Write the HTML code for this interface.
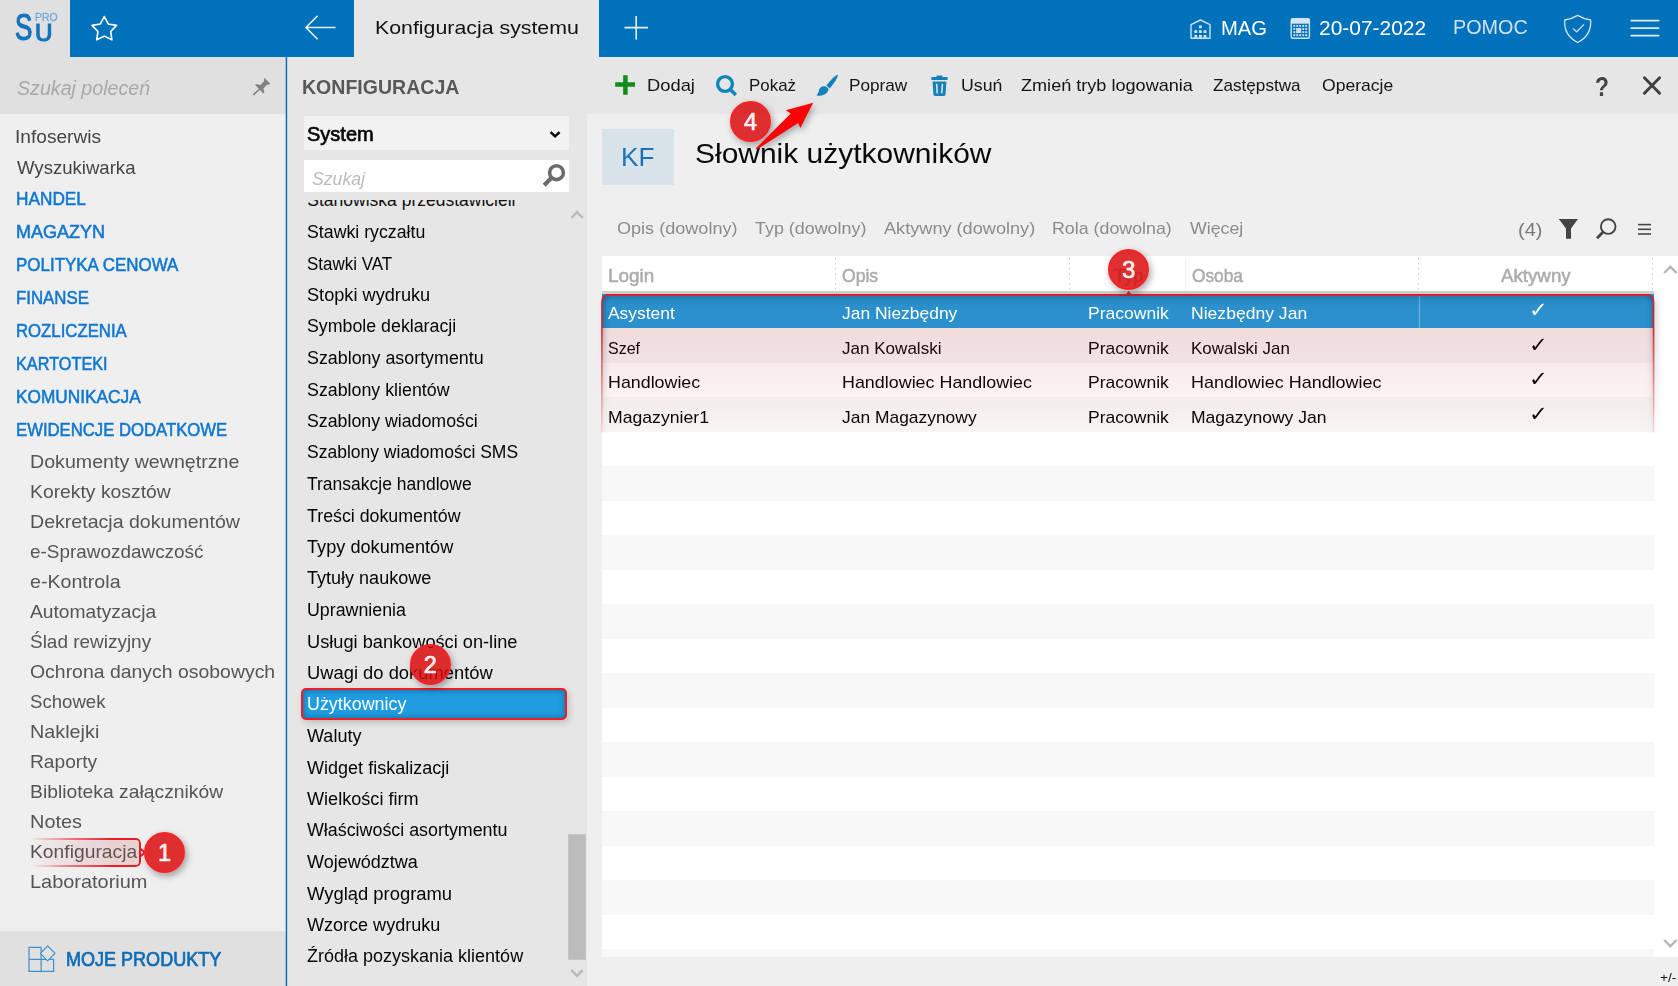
<!DOCTYPE html>
<html lang="pl">
<head>
<meta charset="utf-8">
<title>Konfiguracja systemu - Słownik użytkowników</title>
<style>
html,body{margin:0;padding:0;}
body{width:1678px;height:986px;position:relative;overflow:hidden;background:#efefef;font-family:"Liberation Sans",sans-serif;}
.a{position:absolute;}
.t{position:absolute;white-space:pre;line-height:1;display:block;z-index:4;}
.z5{z-index:6;}
svg{position:absolute;overflow:visible;}
.badge{position:absolute;width:37px;height:37px;border-radius:50%;background:rgba(217,6,8,.83);border:2px solid #f62226;box-shadow:2px 3px 7px rgba(0,0,0,.35);z-index:9;}
.badge span{position:absolute;left:0;right:0;text-align:center;color:rgba(255,255,255,.93);font-weight:400;-webkit-text-stroke:0.7px rgba(255,255,255,.93);font-size:23.5px;line-height:1;top:8px;}
</style>
</head>
<body>
<!-- ======= top bar ======= -->
<div class="a" style="left:0;top:0;width:1678px;height:57px;background:#0071bb;"></div>
<div class="a" style="left:0;top:0;width:70px;height:57px;background:#e0e0e0;"></div>
<div class="a" style="left:354px;top:0;width:245px;height:57px;background:#e6e6e6;"></div>
<!-- ======= left sidebar ======= -->
<div class="a" style="left:0;top:57px;width:286px;height:57px;background:#e0e0e0;"></div>
<div class="a" style="left:0;top:114px;width:286px;height:818px;background:#efefef;"></div>
<div class="a" style="left:0;top:931px;width:286px;height:55px;background:#e0e0e0;"></div>
<!-- ======= middle panel + toolbar ======= -->
<div class="a" style="left:286px;top:57px;width:301px;height:929px;background:#e6e6e6;"></div>
<div class="a" style="left:587px;top:57px;width:1091px;height:57px;background:#e6e6e6;"></div>
<div class="a" style="left:304px;top:116px;width:265px;height:34px;background:#f2f2f2;"></div>
<div class="a" style="left:304px;top:160px;width:265px;height:32px;background:#ffffff;"></div>
<!-- selected list item -->
<div class="a" style="left:301px;top:688px;width:262px;height:28px;background:#1f9de0;border:2px solid #ee1c25;border-radius:5px;box-shadow:inset 0 0 6px rgba(0,40,90,.45), 2px 3px 6px rgba(0,0,0,.18);z-index:5;"></div>
<!-- list scrollbar -->
<div class="a" style="left:568px;top:834px;width:16px;height:124px;background:#bcbcbc;border:1px solid #c6c6c6;"></div>
<!-- ======= content ======= -->
<div class="a" style="left:602px;top:129px;width:72px;height:56px;background:#d9e3ea;"></div>
<!-- table -->
<div class="a" id="tbl" style="left:602px;top:256px;width:1076px;height:701px;background:#ffffff;overflow:hidden;">
<div class="a" style="left:0;top:72.3px;width:1052px;height:34.5px;background:#f8f8f8;"></div>
<div class="a" style="left:0;top:141.3px;width:1052px;height:34.5px;background:#f8f8f8;"></div>
<div class="a" style="left:0;top:210.3px;width:1052px;height:34.5px;background:#f8f8f8;"></div>
<div class="a" style="left:0;top:279.3px;width:1052px;height:34.5px;background:#f8f8f8;"></div>
<div class="a" style="left:0;top:348.3px;width:1052px;height:34.5px;background:#f8f8f8;"></div>
<div class="a" style="left:0;top:417.3px;width:1052px;height:34.5px;background:#f8f8f8;"></div>
<div class="a" style="left:0;top:486.3px;width:1052px;height:34.5px;background:#f8f8f8;"></div>
<div class="a" style="left:0;top:555.3px;width:1052px;height:34.5px;background:#f8f8f8;"></div>
<div class="a" style="left:0;top:624.3px;width:1052px;height:34.5px;background:#f8f8f8;"></div>
<div class="a" style="left:0;top:693.3px;width:1052px;height:34.5px;background:#f8f8f8;"></div>
</div>
<div class="a" style="left:602px;top:291px;width:1052px;height:3px;background:#d2d2d2;"></div>
<svg class="a" style="left:0;top:0;z-index:3;" width="1678" height="986" viewBox="0 0 1678 986"><rect x="285.7" y="57" width="1.5" height="929" fill="#0a6fbc"/>
<polygon points="104.30,16.50 108.24,23.98 116.57,25.41 110.67,31.47 111.88,39.84 104.30,36.10 96.72,39.84 97.93,31.47 92.03,25.41 100.36,23.98" fill="none" stroke="#ffffff" stroke-width="1.6" stroke-linejoin="round"/>
<path d="M335.5,27.5 H306 M317.6,15.8 L306,27.5 L317.6,39.2" fill="none" stroke="#e8f1f8" stroke-width="1.6"/>
<path d="M624.5,27.6 H648 M636.2,16 V39.5" fill="none" stroke="#e8f1f8" stroke-width="1.6"/>
<path d="M1191,38.2 V24.6 L1200.5,20 L1210,24.6 V38.2 Z" fill="none" stroke="#cfe1f0" stroke-width="1.4" stroke-linejoin="round"/>
<rect x="1199.0" y="25.4" width="2.8" height="2.8" fill="#d5e5f2"/>
<rect x="1194.4" y="30.2" width="2.8" height="2.8" fill="#d5e5f2"/>
<rect x="1199.0" y="30.2" width="2.8" height="2.8" fill="#d5e5f2"/>
<rect x="1203.6" y="30.2" width="2.8" height="2.8" fill="#d5e5f2"/>
<rect x="1194.4" y="35.0" width="2.8" height="2.8" fill="#d5e5f2"/>
<rect x="1199.0" y="35.0" width="2.8" height="2.8" fill="#d5e5f2"/>
<rect x="1203.6" y="35.0" width="2.8" height="2.8" fill="#d5e5f2"/>
<rect x="1291.2" y="18.7" width="18.2" height="19.6" rx="1.5" fill="none" stroke="#cfe1f0" stroke-width="1.4"/>
<rect x="1291.2" y="18.7" width="18.2" height="5" fill="#d3e4f2"/>
<rect x="1293.35" y="24.95" width="1.9" height="1.9" fill="#cfe1f0"/>
<rect x="1296.30" y="24.95" width="1.9" height="1.9" fill="#cfe1f0"/>
<rect x="1299.25" y="24.95" width="1.9" height="1.9" fill="#cfe1f0"/>
<rect x="1302.30" y="24.95" width="1.9" height="1.9" fill="#cfe1f0"/>
<rect x="1305.25" y="24.95" width="1.9" height="1.9" fill="#cfe1f0"/>
<rect x="1293.35" y="28.05" width="1.9" height="1.9" fill="#cfe1f0"/>
<rect x="1296.30" y="28.05" width="1.9" height="1.9" fill="#cfe1f0"/>
<rect x="1299.25" y="28.05" width="1.9" height="1.9" fill="#cfe1f0"/>
<rect x="1302.30" y="28.05" width="1.9" height="1.9" fill="#cfe1f0"/>
<rect x="1305.25" y="28.05" width="1.9" height="1.9" fill="#cfe1f0"/>
<rect x="1293.35" y="31.15" width="1.9" height="1.9" fill="#cfe1f0"/>
<rect x="1296.30" y="31.15" width="1.9" height="1.9" fill="#cfe1f0"/>
<rect x="1299.25" y="31.15" width="1.9" height="1.9" fill="#cfe1f0"/>
<rect x="1302.30" y="31.15" width="1.9" height="1.9" fill="#cfe1f0"/>
<rect x="1305.25" y="31.15" width="1.9" height="1.9" fill="#cfe1f0"/>
<rect x="1293.35" y="34.25" width="1.9" height="1.9" fill="#cfe1f0"/>
<rect x="1296.30" y="34.25" width="1.9" height="1.9" fill="#cfe1f0"/>
<rect x="1299.25" y="34.25" width="1.9" height="1.9" fill="#cfe1f0"/>
<rect x="1302.30" y="34.25" width="1.9" height="1.9" fill="#cfe1f0"/>
<rect x="1305.25" y="34.25" width="1.9" height="1.9" fill="#cfe1f0"/>
<rect x="1296.3" y="28.05" width="4.85" height="5" fill="#cfe1f0"/>
<path d="M1577.7,15.4 C1582,18 1586,19.4 1590.6,20 C1591.4,30 1586.5,38 1577.7,42.5 C1568.9,38 1564,30 1564.8,20 C1569.4,19.4 1573.4,18 1577.7,15.4 Z" fill="none" stroke="#d5e5f2" stroke-width="1.3" stroke-linejoin="round"/>
<path d="M1573,28.4 L1576.6,31.9 L1584,24.4" fill="none" stroke="#d5e5f2" stroke-width="1.3"/>
<path d="M1631.2,20.6 H1658.6" stroke="#dfebf5" stroke-width="1.8" stroke-linecap="round"/>
<path d="M1631.2,28.1 H1658.6" stroke="#dfebf5" stroke-width="1.8" stroke-linecap="round"/>
<path d="M1631.2,35.6 H1658.6" stroke="#dfebf5" stroke-width="1.8" stroke-linecap="round"/>
<path d="M1644.4,77.7 L1659.6,93.3 M1659.6,77.7 L1644.4,93.3" stroke="#404040" stroke-width="2.9" stroke-linecap="round"/>
<path d="M264.6,78.1 L270.3,83.8 L268.6,84.7 L267.3,84.4 L263.4,88.6 L264.4,93.0 L263.4,93.6 L255.2,85.0 L255.9,84.0 L260.4,85.0 L264.2,81.0 L263.8,79.3 Z" fill="#828282"/>
<path d="M259.6,89.0 L253.9,94.4" stroke="#828282" stroke-width="1.7" stroke-linecap="round"/>
<path d="M550.6,132.2 L555.1,136.4 L559.6,132.2" fill="none" stroke="#0a0a0a" stroke-width="2.5"/>
<circle cx="556.5" cy="172.7" r="6.9" fill="none" stroke="#6b6b6b" stroke-width="3.6"/>
<path d="M551.6,177.8 L544.2,185.2" stroke="#6b6b6b" stroke-width="4.2"/>
<path d="M571.4,217.8 L577,212.2 L582.6,217.8" fill="none" stroke="#bababa" stroke-width="2.5"/>
<path d="M571.4,970.2 L577,975.8 L582.6,970.2" fill="none" stroke="#bababa" stroke-width="2.6"/>
<path d="M1664.2,273 L1670.4,266.8 L1676.6,273" fill="none" stroke="#b8b8b8" stroke-width="2.4"/>
<path d="M1664.2,940 L1670.4,946.2 L1676.6,940" fill="none" stroke="#b8b8b8" stroke-width="2.4"/>
<path d="M615.2,84.6 H635 M625.4,75.2 V94.7" stroke="#128a1c" stroke-width="4.5"/>
<circle cx="725" cy="84" r="7.4" fill="none" stroke="#0f86ba" stroke-width="3.4"/>
<path d="M730.4,89.6 L735.8,95" stroke="#0f86ba" stroke-width="3.6" stroke-linecap="butt"/>
<path d="M837.6,74.8 C838.4,76.6 834.5,83.2 829.6,88.6 L826.4,85.6 C830.5,80 836,74.6 837.6,74.8 Z" fill="#1482b8"/>
<path d="M825.6,86.6 C822.4,85.6 819.4,87.6 818.9,90.6 C818.6,92.8 817.6,94.4 816.2,95.6 C821.6,96.2 826.6,94.6 828.4,90.2 C828.9,88.9 827.6,87.4 825.6,86.6 Z" fill="#1482b8"/>
<path d="M936.6,76.9 V75.6 H942.4 V76.9 H947.6 V79.9 H931.4 V76.9 Z" fill="#1482b8"/>
<path d="M932.6,81.4 H946.4 L945.6,94.2 Q945.5,95.9 943.8,95.9 H935.2 Q933.5,95.9 933.4,94.2 Z" fill="#1482b8"/>
<path d="M936.6,83.8 L937.2,93.4 M942.4,83.8 L941.8,93.4" stroke="#e6e6e6" stroke-width="1.5"/>
<path d="M1558.8,219 H1578 L1571,228.6 V238.8 H1566 V228.6 Z" fill="#444"/>
<circle cx="1608.2" cy="226.6" r="7.3" fill="none" stroke="#444" stroke-width="1.9"/>
<path d="M1602.8,232.2 L1597,238.2" stroke="#444" stroke-width="2.8"/>
<path d="M1638,224.6 H1651" stroke="#444" stroke-width="1.6"/>
<path d="M1638,229.3 H1651" stroke="#444" stroke-width="1.6"/>
<path d="M1638,234 H1651" stroke="#444" stroke-width="1.6"/>
<path d="M29,947.3 H41.1 V971.3 H29 Z M29,959.4 H53.6 V971.3 H41.1" fill="none" stroke="#3f8fcc" stroke-width="1.2"/>
<path d="M47.6,945.9 L55,953.3 L47.6,960.8 L40.4,953.3 Z" fill="#e0e0e0" stroke="#3f8fcc" stroke-width="1.2" stroke-linejoin="round"/>
<path d="M835.5,258 V291" stroke="#cfcfcf" stroke-width="1" stroke-dasharray="1.5 3.5"/>
<path d="M1069.5,258 V291" stroke="#cfcfcf" stroke-width="1" stroke-dasharray="1.5 3.5"/>
<path d="M1418.5,258 V291" stroke="#cfcfcf" stroke-width="1" stroke-dasharray="1.5 3.5"/>
<path d="M1652.5,258 V291" stroke="#cfcfcf" stroke-width="1" stroke-dasharray="1.5 3.5"/>
<path d="M1185.5,258 V291" stroke="#f4f4f4" stroke-width="1"/></svg>
<div class="a" style="left:602px;top:294px;width:1052px;height:34.2px;background:#2b90cc;z-index:1;"></div>
<div class="a" style="left:1419px;top:296px;width:1px;height:32px;background:rgba(255,255,255,.35);z-index:2;"></div>
<div class="a" style="left:590px;top:284px;width:1088px;height:152px;z-index:5;-webkit-mask-image:linear-gradient(to bottom,#000 0,#000 29%,rgba(0,0,0,.13) 97.5%,rgba(0,0,0,0) 98%);mask-image:linear-gradient(to bottom,#000 0,#000 29%,rgba(0,0,0,.13) 97.5%,rgba(0,0,0,0) 98%);"><div class="a" style="left:12px;top:10px;width:1052px;height:142px;border-radius:7px 7px 0 0;background:linear-gradient(to bottom,rgba(0,0,0,0) 0,rgba(0,0,0,0) 34.2px,rgba(190,30,30,.13) 34.2px);box-shadow:inset 0 6px 8px -3px rgba(0,20,60,.28), inset 6px 0 6px -4px rgba(0,0,0,.22), inset -6px 0 6px -4px rgba(0,0,0,.22), 3px 2px 7px rgba(0,0,0,.16);"></div><svg class="a" style="left:0;top:0;" width="1088" height="152" viewBox="0 0 1088 152"><path d="M11.9,152 V17.5 Q11.9,11 18.8,11 H1056.5 Q1063.6,11 1063.6,17.5 V152" fill="none" stroke="#e01b29" stroke-width="1.5"/><path d="M16,11 H1060" fill="none" stroke="#dd1f2c" stroke-width="2"/></svg></div>
<svg class="a" style="left:1118px;top:286px;z-index:8;" width="22" height="12" viewBox="0 0 22 12"><path d="M7.6,9.6 L10.7,5.6 L13.8,9.6" fill="#dd1f2c" stroke="#dd1f2c" stroke-width="1"/></svg>
<div class="a" style="left:30px;top:838px;width:109px;height:25px;border:2px solid #ee1c25;border-left:none;border-radius:0 5px 5px 0;background:rgba(200,60,60,.16);z-index:5;-webkit-mask-image:linear-gradient(to right,rgba(0,0,0,.0) 0,rgba(0,0,0,.55) 35%,#000 75%);mask-image:linear-gradient(to right,rgba(0,0,0,.0) 0,rgba(0,0,0,.55) 35%,#000 75%);"></div>
<svg class="a" style="left:139px;top:845px;z-index:8;" width="10" height="16" viewBox="0 0 10 16"><path d="M1.2,3.6 L5.8,7.6 L1.2,11.6" fill="none" stroke="#ee1c25" stroke-width="2"/></svg>
<div class="badge" style="left:144.0px;top:832.0px;"><span>1</span></div>
<div class="badge" style="left:409.8px;top:644.3px;"><span>2</span></div>
<div class="badge" style="left:1108.2px;top:249.2px;"><span>3</span></div>
<div class="badge" style="left:730.0px;top:101.2px;"><span>4</span></div>
<svg class="a" style="left:0;top:0;z-index:10;filter:drop-shadow(2px 3px 3px rgba(0,0,0,.3));" width="900" height="200" viewBox="0 0 900 200"><path d="M755.6,148.6 L790.8,113.4 L785.8,110.2 L813.2,102.7 L800.4,128 L798.1,123 L757,149.6 Z" fill="#fb0207"/></svg>
<div class="a" style="left:300px;top:199.5px;width:266px;height:12px;overflow:hidden;z-index:4;"><span class="t" style="left:7.3px;top:-7.8px;font-size:17.5px;color:#111;transform:scaleX(1.0);transform-origin:0 0;" id="clipitem">Stanowiska przedstawicieli</span></div>
<div id="topbar">
<span class="t " style="left:375.28px;top:18.00px;font-size:19px;color:#111;transform:scaleX(1.1223);transform-origin:0 0;">Konfiguracja systemu</span>
<span class="t " style="left:1220.71px;top:18.00px;font-size:20.5px;color:#ffffff;transform:scaleX(0.9877);transform-origin:0 0;">MAG</span>
<span class="t " style="left:1318.78px;top:18.00px;font-size:20.5px;color:#ffffff;transform:scaleX(1.0216);transform-origin:0 0;">20-07-2022</span>
<span class="t " style="left:1453.03px;top:17.00px;font-size:20.5px;color:#cfe2f1;transform:scaleX(0.9655);transform-origin:0 0;">POMOC</span>
</div>
<div id="sidebar-menu">
<span class="t " style="left:17.10px;top:78.00px;font-size:20px;color:#a8a8a8;font-style:italic;transform:scaleX(0.9814);transform-origin:0 0;">Szukaj poleceń</span>
<span class="t " style="left:15.49px;top:127.00px;font-size:19px;color:#444444;transform:scaleX(1.0068);transform-origin:0 0;">Infoserwis</span>
<span class="t " style="left:16.50px;top:158.00px;font-size:19px;color:#444444;transform:scaleX(0.9772);transform-origin:0 0;">Wyszukiwarka</span>
<span class="t " style="left:15.50px;top:190.00px;font-size:18px;color:#1077d0;transform:scaleX(0.9574);transform-origin:0 0;-webkit-text-stroke:0.55px #1077d0;">HANDEL</span>
<span class="t " style="left:15.50px;top:223.00px;font-size:18px;color:#1077d0;transform:scaleX(0.9999);transform-origin:0 0;-webkit-text-stroke:0.55px #1077d0;">MAGAZYN</span>
<span class="t " style="left:15.50px;top:256.00px;font-size:18px;color:#1077d0;transform:scaleX(0.9420);transform-origin:0 0;-webkit-text-stroke:0.55px #1077d0;">POLITYKA CENOWA</span>
<span class="t " style="left:15.50px;top:289.00px;font-size:18px;color:#1077d0;transform:scaleX(0.9345);transform-origin:0 0;-webkit-text-stroke:0.55px #1077d0;">FINANSE</span>
<span class="t " style="left:15.50px;top:322.00px;font-size:18px;color:#1077d0;transform:scaleX(0.9302);transform-origin:0 0;-webkit-text-stroke:0.55px #1077d0;">ROZLICZENIA</span>
<span class="t " style="left:15.50px;top:355.00px;font-size:18px;color:#1077d0;transform:scaleX(0.9037);transform-origin:0 0;-webkit-text-stroke:0.55px #1077d0;">KARTOTEKI</span>
<span class="t " style="left:15.50px;top:388.00px;font-size:18px;color:#1077d0;transform:scaleX(0.9592);transform-origin:0 0;-webkit-text-stroke:0.55px #1077d0;">KOMUNIKACJA</span>
<span class="t " style="left:15.50px;top:421.00px;font-size:18px;color:#1077d0;transform:scaleX(0.9277);transform-origin:0 0;-webkit-text-stroke:0.55px #1077d0;">EWIDENCJE DODATKOWE</span>
<span class="t " style="left:30.00px;top:452.00px;font-size:19px;color:#555555;transform:scaleX(1.0327);transform-origin:0 0;">Dokumenty wewnętrzne</span>
<span class="t " style="left:30.00px;top:482.00px;font-size:19px;color:#555555;transform:scaleX(1.0173);transform-origin:0 0;">Korekty kosztów</span>
<span class="t " style="left:30.00px;top:512.00px;font-size:19px;color:#555555;transform:scaleX(1.0299);transform-origin:0 0;">Dekretacja dokumentów</span>
<span class="t " style="left:30.00px;top:542.00px;font-size:19px;color:#555555;transform:scaleX(0.9958);transform-origin:0 0;">e-Sprawozdawczość</span>
<span class="t " style="left:30.00px;top:572.00px;font-size:19px;color:#555555;transform:scaleX(1.0330);transform-origin:0 0;">e-Kontrola</span>
<span class="t " style="left:30.00px;top:602.00px;font-size:19px;color:#555555;transform:scaleX(1.0124);transform-origin:0 0;">Automatyzacja</span>
<span class="t " style="left:30.00px;top:632.00px;font-size:19px;color:#555555;transform:scaleX(0.9973);transform-origin:0 0;">Ślad rewizyjny</span>
<span class="t " style="left:30.00px;top:662.00px;font-size:19px;color:#555555;transform:scaleX(1.0226);transform-origin:0 0;">Ochrona danych osobowych</span>
<span class="t " style="left:30.00px;top:692.00px;font-size:19px;color:#555555;transform:scaleX(0.9794);transform-origin:0 0;">Schowek</span>
<span class="t " style="left:30.00px;top:722.00px;font-size:19px;color:#555555;transform:scaleX(1.0414);transform-origin:0 0;">Naklejki</span>
<span class="t " style="left:30.00px;top:752.00px;font-size:19px;color:#555555;transform:scaleX(1.0085);transform-origin:0 0;">Raporty</span>
<span class="t " style="left:30.00px;top:782.00px;font-size:19px;color:#555555;transform:scaleX(1.0164);transform-origin:0 0;">Biblioteka załączników</span>
<span class="t " style="left:30.00px;top:812.00px;font-size:19px;color:#555555;transform:scaleX(1.0482);transform-origin:0 0;">Notes</span>
<span class="t " style="left:30.00px;top:842.00px;font-size:19px;color:#555555;transform:scaleX(1.0146);transform-origin:0 0;">Konfiguracja</span>
<span class="t " style="left:30.00px;top:872.00px;font-size:19px;color:#555555;transform:scaleX(1.0493);transform-origin:0 0;">Laboratorium</span>
<span class="t " style="left:66.48px;top:950.00px;font-size:19.5px;color:#0f6cb6;transform:scaleX(0.9244);transform-origin:0 0;-webkit-text-stroke:0.7px #0f6cb6;">MOJE PRODUKTY</span>
</div>
<div id="config-list">
<span class="t " style="left:302.00px;top:78.00px;font-size:19.5px;color:#585858;font-weight:700;transform:scaleX(1.0019);transform-origin:0 0;">KONFIGURACJA</span>
<span class="t " style="left:307.40px;top:124.00px;font-size:20px;color:#050505;transform:scaleX(0.9997);transform-origin:0 0;-webkit-text-stroke:0.65px #050505;">System</span>
<span class="t " style="left:312.40px;top:169.00px;font-size:19px;color:#bbbbbb;font-style:italic;transform:scaleX(0.9290);transform-origin:0 0;">Szukaj</span>
<span class="t " style="left:307.30px;top:224.00px;font-size:17.5px;color:#050505;transform:scaleX(1.0141);transform-origin:0 0;">Stawki ryczałtu</span>
<span class="t " style="left:307.30px;top:256.00px;font-size:17.5px;color:#050505;transform:scaleX(0.9688);transform-origin:0 0;">Stawki VAT</span>
<span class="t " style="left:307.30px;top:287.00px;font-size:17.5px;color:#050505;transform:scaleX(1.0379);transform-origin:0 0;">Stopki wydruku</span>
<span class="t " style="left:307.30px;top:318.00px;font-size:17.5px;color:#050505;transform:scaleX(1.0159);transform-origin:0 0;">Symbole deklaracji</span>
<span class="t " style="left:307.30px;top:350.00px;font-size:17.5px;color:#050505;transform:scaleX(1.0202);transform-origin:0 0;">Szablony asortymentu</span>
<span class="t " style="left:307.30px;top:382.00px;font-size:17.5px;color:#050505;transform:scaleX(1.0175);transform-origin:0 0;">Szablony klientów</span>
<span class="t " style="left:307.30px;top:413.00px;font-size:17.5px;color:#050505;transform:scaleX(1.0144);transform-origin:0 0;">Szablony wiadomości</span>
<span class="t " style="left:307.30px;top:444.00px;font-size:17.5px;color:#050505;transform:scaleX(1.0001);transform-origin:0 0;">Szablony wiadomości SMS</span>
<span class="t " style="left:307.30px;top:476.00px;font-size:17.5px;color:#050505;transform:scaleX(0.9995);transform-origin:0 0;">Transakcje handlowe</span>
<span class="t " style="left:307.30px;top:508.00px;font-size:17.5px;color:#050505;transform:scaleX(1.0163);transform-origin:0 0;">Treści dokumentów</span>
<span class="t " style="left:307.30px;top:539.00px;font-size:17.5px;color:#050505;transform:scaleX(1.0374);transform-origin:0 0;">Typy dokumentów</span>
<span class="t " style="left:307.30px;top:570.00px;font-size:17.5px;color:#050505;transform:scaleX(1.0301);transform-origin:0 0;">Tytuły naukowe</span>
<span class="t " style="left:307.30px;top:602.00px;font-size:17.5px;color:#050505;transform:scaleX(1.0170);transform-origin:0 0;">Uprawnienia</span>
<span class="t " style="left:307.30px;top:634.00px;font-size:17.5px;color:#050505;transform:scaleX(1.0402);transform-origin:0 0;">Usługi bankowości on-line</span>
<span class="t " style="left:307.30px;top:665.00px;font-size:17.5px;color:#050505;transform:scaleX(1.0490);transform-origin:0 0;">Uwagi do dokumentów</span>
<span class="t z5" style="left:307.30px;top:696.00px;font-size:17.5px;color:#ffffff;transform:scaleX(1.0216);transform-origin:0 0;">Użytkownicy</span>
<span class="t " style="left:307.30px;top:728.00px;font-size:17.5px;color:#050505;transform:scaleX(1.0305);transform-origin:0 0;">Waluty</span>
<span class="t " style="left:307.30px;top:760.00px;font-size:17.5px;color:#050505;transform:scaleX(1.0306);transform-origin:0 0;">Widget fiskalizacji</span>
<span class="t " style="left:307.30px;top:791.00px;font-size:17.5px;color:#050505;transform:scaleX(1.0341);transform-origin:0 0;">Wielkości firm</span>
<span class="t " style="left:307.30px;top:822.00px;font-size:17.5px;color:#050505;transform:scaleX(1.0204);transform-origin:0 0;">Właściwości asortymentu</span>
<span class="t " style="left:307.30px;top:854.00px;font-size:17.5px;color:#050505;transform:scaleX(1.0287);transform-origin:0 0;">Województwa</span>
<span class="t " style="left:307.30px;top:886.00px;font-size:17.5px;color:#050505;transform:scaleX(1.0516);transform-origin:0 0;">Wygląd programu</span>
<span class="t " style="left:307.30px;top:917.00px;font-size:17.5px;color:#050505;transform:scaleX(1.0303);transform-origin:0 0;">Wzorce wydruku</span>
<span class="t " style="left:307.30px;top:948.00px;font-size:17.5px;color:#050505;transform:scaleX(1.0287);transform-origin:0 0;">Źródła pozyskania klientów</span>
</div>
<div id="toolbar">
<span class="t " style="left:646.92px;top:77.00px;font-size:17px;color:#151515;transform:scaleX(1.0788);transform-origin:0 0;">Dodaj</span>
<span class="t " style="left:748.51px;top:77.00px;font-size:17px;color:#151515;transform:scaleX(0.9946);transform-origin:0 0;">Pokaż</span>
<span class="t " style="left:848.99px;top:77.00px;font-size:17px;color:#151515;transform:scaleX(1.0111);transform-origin:0 0;">Popraw</span>
<span class="t " style="left:960.96px;top:77.00px;font-size:17px;color:#151515;transform:scaleX(1.0410);transform-origin:0 0;">Usuń</span>
<span class="t " style="left:1021.00px;top:77.00px;font-size:17px;color:#151515;transform:scaleX(1.0640);transform-origin:0 0;">Zmień tryb logowania</span>
<span class="t " style="left:1212.60px;top:77.00px;font-size:17px;color:#151515;transform:scaleX(1.0083);transform-origin:0 0;">Zastępstwa</span>
<span class="t " style="left:1322.00px;top:77.00px;font-size:17px;color:#151515;transform:scaleX(1.0332);transform-origin:0 0;">Operacje</span>
<span class="t " style="left:1594.99px;top:73.00px;font-size:28px;color:#444;font-weight:700;transform:scaleX(0.8133);transform-origin:0 0;">?</span>
</div>
<div id="content-header">
<span class="t " style="left:621.02px;top:144.00px;font-size:26.5px;color:#1b73b7;transform:scaleX(0.9882);transform-origin:0 0;">KF</span>
<span class="t " style="left:695.23px;top:140.00px;font-size:28px;color:#0a0a0a;transform:scaleX(1.0702);transform-origin:0 0;">Słownik użytkowników</span>
</div>
<div id="filters">
<span class="t " style="left:617.00px;top:220.00px;font-size:17px;color:#8b8b8b;transform:scaleX(1.0629);transform-origin:0 0;">Opis (dowolny)</span>
<span class="t " style="left:755.30px;top:220.00px;font-size:17px;color:#8b8b8b;transform:scaleX(1.0527);transform-origin:0 0;">Typ (dowolny)</span>
<span class="t " style="left:884.00px;top:220.00px;font-size:17px;color:#8b8b8b;transform:scaleX(1.0670);transform-origin:0 0;">Aktywny (dowolny)</span>
<span class="t " style="left:1052.45px;top:220.00px;font-size:17px;color:#8b8b8b;transform:scaleX(1.0473);transform-origin:0 0;">Rola (dowolna)</span>
<span class="t " style="left:1190.00px;top:220.00px;font-size:17px;color:#8b8b8b;transform:scaleX(1.0452);transform-origin:0 0;">Więcej</span>
<span class="t " style="left:1517.95px;top:220.00px;font-size:19px;color:#7a7a7a;transform:scaleX(1.0505);transform-origin:0 0;">(4)</span>
</div>
<div id="grid-header">
<span class="t " style="left:607.62px;top:268.00px;font-size:17.5px;color:#acacac;transform:scaleX(1.0782);transform-origin:0 0;-webkit-text-stroke:0.5px #acacac;">Login</span>
<span class="t " style="left:842.40px;top:268.00px;font-size:17.5px;color:#acacac;transform:scaleX(1.0019);transform-origin:0 0;-webkit-text-stroke:0.5px #acacac;">Opis</span>
<span class="t " style="left:1113.50px;top:268.00px;font-size:17.5px;color:#acacac;transform:scaleX(1.0373);transform-origin:0 0;-webkit-text-stroke:0.5px #acacac;">Typ</span>
<span class="t " style="left:1192.00px;top:268.00px;font-size:17.5px;color:#acacac;transform:scaleX(0.9879);transform-origin:0 0;-webkit-text-stroke:0.5px #acacac;">Osoba</span>
<span class="t " style="left:1500.70px;top:268.00px;font-size:17.5px;color:#acacac;transform:scaleX(1.0687);transform-origin:0 0;-webkit-text-stroke:0.5px #acacac;">Aktywny</span>
</div>
<div id="grid-rows">
<span class="t " style="left:608.00px;top:305.00px;font-size:17px;color:#ffffff;transform:scaleX(1.0234);transform-origin:0 0;">Asystent</span>
<span class="t " style="left:841.50px;top:305.00px;font-size:17px;color:#ffffff;transform:scaleX(1.0252);transform-origin:0 0;">Jan Niezbędny</span>
<span class="t " style="left:1087.87px;top:305.00px;font-size:17px;color:#ffffff;transform:scaleX(1.0306);transform-origin:0 0;">Pracownik</span>
<span class="t " style="left:1191.00px;top:305.00px;font-size:17px;color:#ffffff;transform:scaleX(1.0330);transform-origin:0 0;">Niezbędny Jan</span>
<span class="t " style="left:1528.60px;top:300.00px;font-size:21px;color:#ffffff;transform:scaleX(1.0667);transform-origin:0 0;font-family:'DejaVu Sans',sans-serif;">✓</span>
<span class="t " style="left:608.00px;top:340.00px;font-size:17px;color:#050505;transform:scaleX(0.9390);transform-origin:0 0;">Szef</span>
<span class="t " style="left:841.50px;top:340.00px;font-size:17px;color:#050505;transform:scaleX(1.0027);transform-origin:0 0;">Jan Kowalski</span>
<span class="t " style="left:1087.87px;top:340.00px;font-size:17px;color:#050505;transform:scaleX(1.0306);transform-origin:0 0;">Pracownik</span>
<span class="t " style="left:1191.00px;top:340.00px;font-size:17px;color:#050505;transform:scaleX(0.9964);transform-origin:0 0;">Kowalski Jan</span>
<span class="t " style="left:1528.60px;top:335.00px;font-size:21px;color:#050505;transform:scaleX(1.0667);transform-origin:0 0;font-family:'DejaVu Sans',sans-serif;">✓</span>
<span class="t " style="left:608.00px;top:374.00px;font-size:17px;color:#050505;transform:scaleX(1.0489);transform-origin:0 0;">Handlowiec</span>
<span class="t " style="left:841.50px;top:374.00px;font-size:17px;color:#050505;transform:scaleX(1.0526);transform-origin:0 0;">Handlowiec Handlowiec</span>
<span class="t " style="left:1087.87px;top:374.00px;font-size:17px;color:#050505;transform:scaleX(1.0306);transform-origin:0 0;">Pracownik</span>
<span class="t " style="left:1191.00px;top:374.00px;font-size:17px;color:#050505;transform:scaleX(1.0553);transform-origin:0 0;">Handlowiec Handlowiec</span>
<span class="t " style="left:1528.60px;top:369.00px;font-size:21px;color:#050505;transform:scaleX(1.0667);transform-origin:0 0;font-family:'DejaVu Sans',sans-serif;">✓</span>
<span class="t " style="left:608.00px;top:409.00px;font-size:17px;color:#050505;transform:scaleX(1.0375);transform-origin:0 0;">Magazynier1</span>
<span class="t " style="left:841.50px;top:409.00px;font-size:17px;color:#050505;transform:scaleX(1.0247);transform-origin:0 0;">Jan Magazynowy</span>
<span class="t " style="left:1087.87px;top:409.00px;font-size:17px;color:#050505;transform:scaleX(1.0306);transform-origin:0 0;">Pracownik</span>
<span class="t " style="left:1191.00px;top:409.00px;font-size:17px;color:#050505;transform:scaleX(1.0314);transform-origin:0 0;">Magazynowy Jan</span>
<span class="t " style="left:1528.60px;top:404.00px;font-size:21px;color:#050505;transform:scaleX(1.0667);transform-origin:0 0;font-family:'DejaVu Sans',sans-serif;">✓</span>
</div>
<div id="statusbar">
<span class="t " style="left:1659.90px;top:972.00px;font-size:12px;color:#111;transform:scaleX(1.1435);transform-origin:0 0;">+/-</span>
</div>
<div id="logo">
<span class="t " style="left:15.08px;top:10.00px;font-size:36px;color:#1273be;transform:scaleX(0.7227);transform-origin:0 0;-webkit-text-stroke:1.2px #1273be;">S</span>
<span class="t " style="left:34.81px;top:21.00px;font-size:24.5px;color:#1273be;transform:scaleX(0.9867);transform-origin:0 0;-webkit-text-stroke:1.2px #1273be;">U</span>
<span class="t " style="left:35.20px;top:12.00px;font-size:10.6px;color:#6fa9d8;transform:scaleX(0.9817);transform-origin:0 0;-webkit-text-stroke:0.3px #6fa9d8;">PRO</span>
</div>
</body>
</html>
